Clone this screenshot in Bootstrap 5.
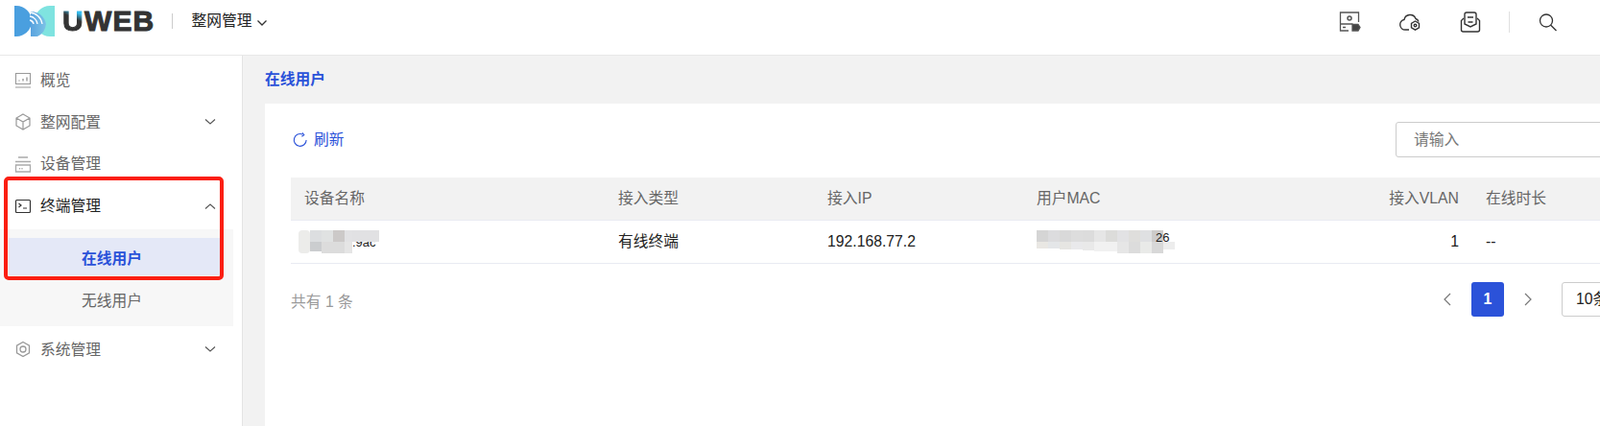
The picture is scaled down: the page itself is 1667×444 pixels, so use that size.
<!doctype html>
<html lang="zh-CN">
<head>
<meta charset="utf-8">
<title>UWEB</title>
<link href="https://cdn.jsdelivr.net/npm/bootstrap@5.3.0/dist/css/bootstrap.min.css" rel="stylesheet">
<style>
html,body{height:444px;overflow:hidden;}
body{font-family:"Liberation Sans","Noto Sans CJK SC",sans-serif;font-size:15.75px;color:#222;background:#fff;}
.top-bar{height:58px;border-bottom:1px solid #e8e8e8;background:#fff;padding:6px 0 0 15px;align-items:flex-start;}
.logo-mark{width:42px;height:32px;flex:none;display:block;}
.logo-word{font-weight:700;font-size:30px;line-height:32px;letter-spacing:1.2px;color:#333;margin-left:8px;-webkit-text-stroke:1px #333;}
.logo-u{background:linear-gradient(205deg,#35bdf0 0 26%,#333 44%);-webkit-background-clip:text;background-clip:text;-webkit-text-fill-color:transparent;-webkit-text-stroke:1px transparent;}
.v-sep{width:1px;height:16px;background:#ccc;margin:8px 19px 0 18px;flex:none;}
.v-sep-b{height:22px;margin:1px 28px 0 28px;background:#e0e0e0;}
.site-name{line-height:32px;color:#222;}
.site-name svg{margin-left:5px;vertical-align:-1px;}
.tools{margin-left:auto;padding-top:5px;}
.tool{width:24px;height:24px;display:block;flex:none;}
.tool-gap{margin-right:39px;}
.tool-trail{width:42px;}
.page-body{height:386px;}
.side{width:253px;flex:none;background:#fff;border-right:1px solid #e4e4e4;padding-top:4px;position:relative;}
.menu-row{height:43.67px;padding:0 27px 0 14px;color:#666;}
.menu-row svg.ico{width:20px;height:20px;margin-right:8px;flex:none;}
.menu-row .caret-r{margin-left:auto;}
.menu-open{color:#222;}
.sub-menu{width:243px;background:#f7f7f7;padding:9px 0 0;height:101px;margin:2px 0 3px;}
.sub-item{height:39px;margin-left:9px;width:221px;padding:6px 0 0 76px;display:flex;align-items:center;color:#666;}
.sub-active{background:#e4e8f7;color:#2b52d9;font-weight:700;margin-bottom:5px;}
.mark-box{position:absolute;left:4px;top:126px;width:229px;height:108px;border:4px solid #fb1e12;border-radius:5px;pointer-events:none;}
.work{background:#f2f2f2;flex:1;min-width:0;padding:0 0 0 23px;overflow:hidden;}
.crumb{height:50px;line-height:49px;color:#2b52d9;font-weight:700;}
.panel{width:1500px;height:340px;border:0;border-radius:0;background:#fff;padding:19px 0 0 27px;}
.tool-row{width:1473px;}
.refresh{color:#2b52d9;padding:0;border:0;background:none;line-height:37px;height:37px;white-space:nowrap;}
.refresh svg{margin:0 6px 0 2px;vertical-align:-3px;}
.seek{width:300px;height:37px;margin:0 22px 0 auto;font-size:15.75px;padding:0 18px;border-color:#ccc;border-radius:3px;color:#666;}
.seek::placeholder{color:#777;}
.grid-table{table-layout:fixed;width:1473px;margin:21px 0 0;font-size:15.75px;}
.grid-table th,.grid-table td{padding:0 14px;vertical-align:middle;border-bottom:1px solid #e9ebf2;color:#222;font-weight:400;box-shadow:none;}
.grid-table th{background:#f2f2f2;color:#666;height:44px;}
.grid-table td{height:45px;}
.c1{width:327px;} .c2,.c3{width:218px;} .c4{width:334px;} .c5{width:134px;}
.grid-table .num-r{text-align:right;}
.blur-a{display:block;}
.blur-shift{margin-left:-6px;}
.foot{height:56px;margin-top:19px;padding-right:49px;width:1473px;box-sizing:border-box;}
.total{color:#999;padding-top:9px;}
.pager{margin:0 0 0 auto;}
.pg-arrow{width:50px;height:36px;display:flex;align-items:center;justify-content:center;}
.pg-on{width:34px;height:36px;background:#2b52d9;color:#fff;font-weight:700;border-radius:3px;display:flex;align-items:center;justify-content:center;}
.pg-size{width:100px;height:36px;margin-left:10px;padding:0 14px;font-size:15.75px;border-color:#ccc;border-radius:3px;color:#222;background-image:none;}
</style>
</head>
<body>
<header class="top-bar d-flex">
  <svg class="logo-mark" viewBox="0 0 42 32" aria-label="logo">
    <defs><linearGradient id="midg" x1="0" y1="0" x2="1" y2="0"><stop offset="0" stop-color="#5aa3df"/><stop offset="1" stop-color="#7cc2e6"/></linearGradient></defs>
    <path d="M42 0v32h-5a16 16 0 0 1 0-32z" fill="#7fe3e0"/>
    <path d="M0 0h2a16 16 0 0 1 0 32H0z" fill="#4a9fdf"/>
    <path d="M17 32V6a16 16 0 0 1 16 13 16 16 0 0 1-9 13z" fill="url(#midg)"/>
    <path d="M16 7a14 14 0 0 1 13 12M16 11a9 9 0 0 1 8 8M16 15a5 5 0 0 1 4 4" fill="none" stroke="#fff" stroke-width="1.300"/>
  </svg>
  <div class="logo-word"><span class="logo-u">U</span>WEB</div>
  <span class="v-sep"></span>
  <div class="site-name">整网管理<svg width="12" height="8" viewBox="0 0 12 8"><path d="M1.500 1.500 6 6l4.500-4.500" fill="none" stroke="#333" stroke-width="1.300"/></svg></div>
  <div class="tools d-flex">
    <svg class="tool tool-gap" viewBox="0 0 24 24" fill="none" stroke="#555" stroke-width="1.300"><path d="M11 21H2.500V2h19v10M2.500 14h13M5 17.500h3"/><circle cx="12" cy="8" r="2" stroke-width="1.500"/><path d="M15 14.500h6l2 3-2 3.500h-6z" fill="#444"/></svg>
    <svg class="tool tool-gap" viewBox="0 0 24 24" fill="none" stroke="#333" stroke-width="1.400"><path d="M11 20H7a5.300 5.300 0 0 1-1-10.500A6.300 6.300 0 0 1 18 8.500a5 5 0 0 1 3 3"/><path d="M17.500 11l4 2.300v4.600l-4 2.300-4-2.300v-4.600z"/><circle cx="17.500" cy="15.600" r="1.300"/></svg>
    <svg class="tool" viewBox="0 0 24 24" fill="none" stroke="#333" stroke-width="1.400"><path d="M5 8 2.500 10.500V20a2 2 0 0 0 2 2h15a2 2 0 0 0 2-2V10.500L19 8"/><path d="M6 14V4a2 2 0 0 1 2-2h8a2 2 0 0 1 2 2v10l-6 3z"/><path d="M9 7h6M9.500 12h5"/></svg>
    <span class="v-sep v-sep-b"></span>
    <svg class="tool" viewBox="0 0 24 24" fill="none" stroke="#333" stroke-width="1.300"><circle cx="10" cy="10.500" r="6.500"/><path d="m14.700 15.200 5.800 5.800"/></svg>
    <span class="tool-trail"></span>
  </div>
</header>
<div class="page-body d-flex">
  <aside class="side">
    <div class="menu-row d-flex align-items-center">
      <svg class="ico" viewBox="0 0 20 20" fill="none" stroke="#999" stroke-width="1.100"><path d="M2.500 2.500h15v11h-15zM2 17h16" /><path d="M6 10.500v-1M10 10.500v-2.500M14 10.500v-4" stroke-width="1.400"/></svg>概览
    </div>
    <div class="menu-row d-flex align-items-center">
      <svg class="ico" viewBox="0 0 20 20" fill="none" stroke="#999" stroke-width="1.200"><path d="m10 2 7 4v8l-7 4-7-4V6zM3 6l7 4 7-4M10 10v8"/></svg>整网配置
      <svg class="caret-r" width="12" height="8" viewBox="0 0 12 8"><path d="M1 1.500 6 6l5-4.500" fill="none" stroke="#555" stroke-width="1.100"/></svg>
    </div>
    <div class="menu-row d-flex align-items-center">
      <svg class="ico" viewBox="0 0 20 20" fill="none" stroke="#aaa" stroke-width="1.300"><path d="M5 3h10M2 7.500h16M2.500 11h15v7h-15zM6.500 14v1.500M9 14v1.500"/></svg>设备管理
    </div>
    <div class="menu-row menu-open d-flex align-items-center">
      <svg class="ico" viewBox="0 0 20 20" fill="none" stroke="#333" stroke-width="1.200"><rect x="2.500" y="3.500" width="15" height="13" rx="1"/><path d="m5.500 7 2.500 2-2.500 2M10 12h4"/></svg>终端管理
      <svg class="caret-r" width="12" height="8" viewBox="0 0 12 8"><path d="M1 6.500 6 2l5 4.500" fill="none" stroke="#555" stroke-width="1.100"/></svg>
    </div>
    <div class="sub-menu">
      <div class="sub-item sub-active">在线用户</div>
      <div class="sub-item">无线用户</div>
    </div>
    <div class="menu-row d-flex align-items-center">
      <svg class="ico" viewBox="0 0 20 20" fill="none" stroke="#999" stroke-width="1.300"><path d="m10 2.500 6.500 3.700v7.600L10 17.500l-6.500-3.700V6.200z"/><circle cx="10" cy="10" r="3"/></svg>系统管理
      <svg class="caret-r" width="12" height="8" viewBox="0 0 12 8"><path d="M1 1.500 6 6l5-4.500" fill="none" stroke="#555" stroke-width="1.100"/></svg>
    </div>
    <div class="mark-box"></div>
  </aside>
  <main class="work">
    <div class="crumb">在线用户</div>
    <section class="card panel">
      <div class="d-flex tool-row">
        <button type="button" class="refresh flex-shrink-0"><svg width="16" height="16" viewBox="0 0 17 17" fill="none" stroke="#2b52d9" stroke-width="1.200"><path d="M15 8.500A6.800 6.800 0 1 1 11 2.200"/><path d="M10.500 0.500 12.500 2.800 10 4.500"/></svg>刷新</button>
        <input class="form-control seek" type="text" placeholder="请输入">
      </div>
      <table class="table grid-table">
        <thead><tr><th class="c1">设备名称</th><th class="c2">接入类型</th><th class="c3">接入IP</th><th class="c4">用户MAC</th><th class="c5 num-r">接入VLAN</th><th>在线时长</th></tr></thead>
        <tbody><tr>
          <td>
            <svg class="blur-a blur-shift" width="84" height="24" viewBox="0 0 84 24">
              <rect x="0" width="12" height="24" rx="4" fill="#ececea"/><rect x="12" width="12" height="12" fill="#dcdee0"/><rect x="24" width="12" height="12" fill="#e0e2e2"/><rect x="36" width="12" height="12" fill="#ccc9c8"/><rect x="48" width="12" height="12" fill="#e2e2e4"/><rect x="60" width="12" height="12" fill="#dfdfe0"/><rect x="72" width="12" height="12" fill="#e1e1e3"/>
              <rect x="12" y="12" width="12" height="10" fill="#cbcdcf"/><rect x="24" y="12" width="12" height="12" fill="#dcdcdc"/><rect x="36" y="12" width="12" height="12" fill="#dcdcdc"/><rect x="48" y="12" width="8" height="12" fill="#e5e5e5"/>
              <text x="56" y="17" font-size="13" fill="#222">.9ac</text><rect x="56" y="17" width="28" height="7" fill="#fff"/><rect x="56" y="0" width="28" height="12" fill="#e1e1e3"/>
            </svg>
          </td>
          <td>有线终端</td><td>192.168.77.2</td>
          <td>
            <svg class="blur-a" width="144" height="24" viewBox="0 0 144 24">
              <rect x="0" width="12" height="12" fill="#d5d5d5"/><rect x="12" width="12" height="12" fill="#dcdcde"/><rect x="24" width="12" height="12" fill="#d9d9d9"/><rect x="36" width="12" height="12" fill="#dddddd"/><rect x="48" width="12" height="12" fill="#dcdcdc"/><rect x="60" width="12" height="12" fill="#e6e6e6"/><rect x="72" width="12" height="12" fill="#dcdcda"/><rect x="84" width="12" height="12" fill="#e2e2e4"/><rect x="96" width="12" height="12" fill="#dfdedc"/><rect x="108" width="12" height="12" fill="#dfe0e2"/><rect x="120" width="12" height="12" fill="#cdcbca"/>
              <rect x="0" y="12" width="12" height="7" fill="#e9e7e3"/><rect x="12" y="12" width="12" height="7" fill="#e4e6e8"/><rect x="24" y="12" width="12" height="8" fill="#e6e5e2"/><rect x="36" y="12" width="12" height="8" fill="#e9e9eb"/><rect x="48" y="12" width="12" height="9" fill="#e9e9e9"/><rect x="60" y="12" width="24" height="10" fill="#f1f1f1"/><rect x="84" y="12" width="12" height="12" fill="#e6e6e6"/><rect x="96" y="12" width="12" height="12" fill="#dcdcdc"/><rect x="108" y="12" width="12" height="12" fill="#e9eae8"/><rect x="120" y="12" width="12" height="12" fill="#d8d8d8"/><rect x="132" y="12" width="12" height="8" fill="#ededed"/>
              <text x="124" y="12" font-size="13" fill="#222">26</text>
            </svg>
          </td>
          <td class="num-r">1</td><td>--</td>
        </tr></tbody>
      </table>
      <div class="foot d-flex align-items-start">
        <div class="total">共有 1 条</div>
        <div class="pager d-flex align-items-center">
          <span class="pg-arrow"><svg width="10" height="16" viewBox="0 0 10 16"><path d="M8 2 2 8l6 6" fill="none" stroke="#777" stroke-width="1.200"/></svg></span>
          <span class="pg-on">1</span>
          <span class="pg-arrow"><svg width="10" height="16" viewBox="0 0 10 16"><path d="m2 2 6 6-6 6" fill="none" stroke="#777" stroke-width="1.200"/></svg></span>
          <select class="form-select pg-size"><option>10条/页</option></select>
        </div>
      </div>
    </section>
  </main>
</div>
</body>
</html>
